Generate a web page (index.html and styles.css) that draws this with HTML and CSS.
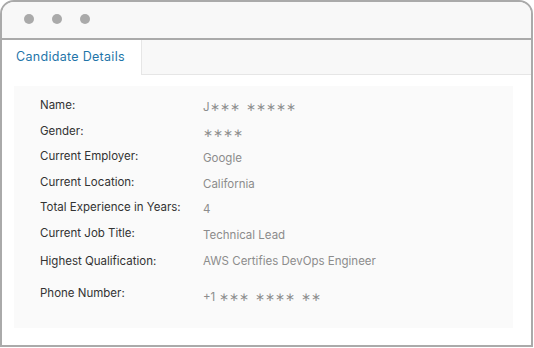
FILE: index.html
```html
<!DOCTYPE html>
<html lang="en">
<head>
    <meta charset="UTF-8">
    <title>Candidate Details</title>
    <link rel="stylesheet" href="styles.css">
</head>
<body>
    <div class="window">
        <div class="titlebar">
            <span class="dot"></span>
            <span class="dot"></span>
            <span class="dot"></span>
        </div>

        <div class="tabs">
            <div class="tab active">Candidate Details</div>
            <div class="tab-rest"></div>
        </div>

        <div class="panel">
            <div class="row">
                <span class="label">Name:</span>
                <span class="value">J∗∗∗&nbsp; ∗∗∗∗∗</span>
            </div>
            <div class="row">
                <span class="label">Gender:</span>
                <span class="value">∗∗∗∗</span>
            </div>
            <div class="row">
                <span class="label">Current Employer:</span>
                <span class="value">Google</span>
            </div>
            <div class="row">
                <span class="label">Current Location:</span>
                <span class="value">California</span>
            </div>
            <div class="row">
                <span class="label">Total Experience in Years:</span>
                <span class="value">4</span>
            </div>
            <div class="row">
                <span class="label">Current Job Title:</span>
                <span class="value">Technical Lead</span>
            </div>
            <div class="row row-qual">
                <span class="label">Highest Qualification:</span>
                <span class="value">AWS Certifies DevOps Engineer</span>
            </div>
            <div class="row row-phone">
                <span class="label">Phone Number:</span>
                <span class="value">+1 ∗∗∗&nbsp; ∗∗∗∗&nbsp; ∗∗</span>
            </div>
        </div>
    </div>
</body>
</html>
```

FILE: styles.css
```css
* {
    margin: 0;
    padding: 0;
    box-sizing: border-box;
}

body {
    background-color: #ffffff;
    font-family: 'Inter', 'Noto Sans', sans-serif;
}

.window {
    width: 533px;
    height: 347px;
    border: 2px solid #aaaaaa;
    border-radius: 14px 14px 0 0;
    overflow: hidden;
    background-color: #ffffff;
}

.titlebar {
    height: 38px;
    background-color: #f8f8f8;
    border-bottom: 2px solid #aaaaaa;
    display: flex;
    align-items: center;
    gap: 18px;
    padding: 0 0 2px 22px;
}

.dot {
    width: 10px;
    height: 10px;
    border-radius: 50%;
    background-color: #aaaaaa;
}

.tabs {
    display: flex;
    height: 35px;
}

.tab {
    width: 139px;
    padding: 9px 0 0 14px;
    font-size: 12.5px;
    color: #1f75a9;
    letter-spacing: 0.3px;
}

.tab-rest {
    flex: 1;
    background-color: #f8f8f8;
    border-left: 1px solid #e6e6e6;
    border-bottom: 1px solid #e6e6e6;
}

.panel {
    margin: 11px 0 0 12px;
    width: 499px;
    height: 242px;
    background-color: #fafafa;
    padding: 11px 0 0 26px;
}

.row {
    display: grid;
    grid-template-columns: 163px 1fr;
    height: 25.5px;
    font-size: 11.5px;
    line-height: 16px;
}

.label {
    color: #333333;
}

.value {
    color: #8c8c8c;
    padding-top: 2px;
}

.row-qual {
    margin-top: 2.5px;
}

.row-qual .value {
    padding-top: 0;
}

.row-phone {
    margin-top: 7px;
}

.row-phone .value {
    padding-top: 4px;
}
```
